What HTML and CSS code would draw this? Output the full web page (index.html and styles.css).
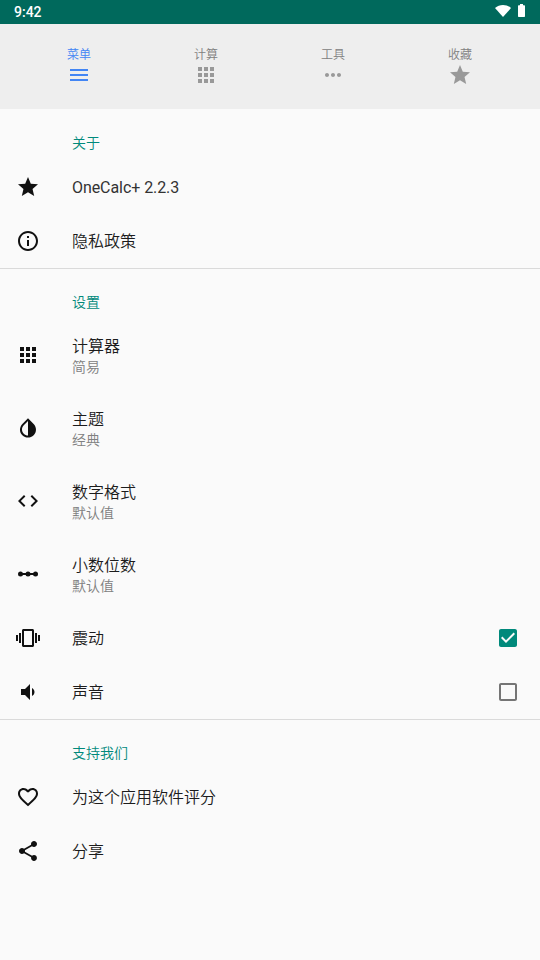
FILE: index.html
```html
<!DOCTYPE html>
<html lang="zh-CN">
  <head>
    <meta charset="UTF-8" />
    <meta name="viewport" content="width=device-width, initial-scale=1.0" />
    <title>OneCalc+</title>
    <link rel="stylesheet" href="styles.css">
  </head>
  <body>
    <header class="status-bar">
      <span class="clock">9:42</span>
      <div class="status-icons">
        <svg class="wifi" width="16" height="12" viewBox="0 0 16 12"><path d="M0 3C4.500-.9 11.500-.9 16 3L8 12z" /></svg>
        <svg class="battery" width="7" height="13" viewBox="0 0 7 13"><path d="M2 0h3v1.300h1.300q.7 0 .7.700V12.300q0 .7-.7.700H.7q-.7 0-.7-.7V2q0-.7.700-.7H2z" /></svg>
      </div>
    </header>

    <nav class="tabs">
      <a class="tab active" href="#">
        <span>菜单</span>
        <svg class="icon" viewBox="0 0 24 24"><path d="M3 18h18v-2H3v2zm0-5h18v-2H3v2zm0-7v2h18V6H3z" /></svg>
      </a>
      <a class="tab" href="#">
        <span>计算</span>
        <svg class="icon" viewBox="0 0 24 24"><path d="M4 8h4V4H4v4zm6 12h4v-4h-4v4zm-6 0h4v-4H4v4zm0-6h4v-4H4v4zm6 0h4v-4h-4v4zm6-10v4h4V4h-4zm-6 4h4V4h-4v4zm6 6h4v-4h-4v4zm0 6h4v-4h-4v4z" /></svg>
      </a>
      <a class="tab" href="#">
        <span>工具</span>
        <svg class="icon" viewBox="0 0 24 24"><path d="M6 10c-1.100 0-2 .9-2 2s.9 2 2 2 2-.9 2-2-.9-2-2-2zm12 0c-1.100 0-2 .9-2 2s.9 2 2 2 2-.9 2-2-.9-2-2-2zm-6 0c-1.100 0-2 .9-2 2s.9 2 2 2 2-.9 2-2-.9-2-2-2z" /></svg>
      </a>
      <a class="tab" href="#">
        <span>收藏</span>
        <svg class="icon" viewBox="0 0 24 24"><path d="M12 17.270L18.180 21l-1.640-7.030L22 9.240l-7.190-.61L12 2 9.190 8.630 2 9.240l5.460 4.730L5.820 21z" /></svg>
      </a>
    </nav>

    <main>
      <section class="group">
        <h2>关于</h2>
        <div class="row">
          <svg class="icon" viewBox="0 0 24 24"><path d="M12 17.270L18.180 21l-1.640-7.030L22 9.240l-7.190-.61L12 2 9.190 8.630 2 9.240l5.460 4.730L5.820 21z" /></svg>
          <div class="title latin">OneCalc+ 2.2.3</div>
        </div>
        <div class="row">
          <svg class="icon" viewBox="0 0 24 24"><path d="M11 7h2v2h-2zm0 4h2v6h-2zm1-9C6.480 2 2 6.480 2 12s4.480 10 10 10 10-4.480 10-10S17.520 2 12 2zm0 18c-4.410 0-8-3.590-8-8s3.590-8 8-8 8 3.590 8 8-3.590 8-8 8z" /></svg>
          <div class="title">隐私政策</div>
        </div>
      </section>

      <section class="group">
        <h2>设置</h2>
        <div class="row tall">
          <svg class="icon" viewBox="0 0 24 24"><path d="M4 8h4V4H4v4zm6 12h4v-4h-4v4zm-6 0h4v-4H4v4zm0-6h4v-4H4v4zm6 0h4v-4h-4v4zm6-10v4h4V4h-4zm-6 4h4V4h-4v4zm6 6h4v-4h-4v4zm0 6h4v-4h-4v4z" /></svg>
          <div>
            <div class="title">计算器</div>
            <div class="summary">简易</div>
          </div>
        </div>
        <div class="row tall">
          <svg class="icon" viewBox="0 0 24 24"><path d="M17.660 7.930L12 2.270 6.340 7.930c-3.120 3.120-3.120 8.190 0 11.310C7.900 20.800 9.950 21.580 12 21.580s4.100-.78 5.660-2.340c3.120-3.120 3.120-8.190 0-11.310zM12 19.590c-1.600 0-3.110-.62-4.240-1.760C6.620 16.690 6 15.190 6 13.590s.62-3.110 1.760-4.240L12 5.100v14.490z" /></svg>
          <div>
            <div class="title">主题</div>
            <div class="summary">经典</div>
          </div>
        </div>
        <div class="row tall">
          <svg class="icon" viewBox="0 0 24 24"><path d="M9.400 16.600L4.800 12l4.600-4.600L8 6l-6 6 6 6 1.400-1.400zm5.200 0l4.600-4.600-4.600-4.600L16 6l6 6-6 6-1.400-1.400z" /></svg>
          <div>
            <div class="title">数字格式</div>
            <div class="summary">默认值</div>
          </div>
        </div>
        <div class="row tall">
          <svg class="icon" viewBox="0 0 24 24"><path d="M4.500 11h15v2h-15z" /><circle cx="4.500" cy="12" r="2.500" /><circle cx="12" cy="12" r="2.500" /><circle cx="19.500" cy="12" r="2.500" /></svg>
          <div>
            <div class="title">小数位数</div>
            <div class="summary">默认值</div>
          </div>
        </div>
        <div class="row">
          <svg class="icon" viewBox="0 0 24 24"><path d="M0 15h2V9H0v6zm3 2h2V7H3v10zm19-8v6h2V9h-2zm-3 8h2V7h-2v10zM16.500 3h-9C6.670 3 6 3.670 6 4.500v15c0 .83.670 1.500 1.500 1.500h9c.83 0 1.500-.67 1.500-1.500v-15c0-.83-.67-1.500-1.500-1.500zM16 19H8V5h8v14z" /></svg>
          <div class="title">震动</div>
          <svg class="icon checkbox checked" viewBox="0 0 24 24"><path d="M19 3H5c-1.110 0-2 .9-2 2v14c0 1.100.890 2 2 2h14c1.110 0 2-.9 2-2V5c0-1.100-.89-2-2-2zm-9 14l-5-5 1.410-1.410L10 14.170l7.590-7.590L19 8l-9 9z" /></svg>
        </div>
        <div class="row">
          <svg class="icon" viewBox="0 0 24 24"><path d="M18.500 12c0-1.770-1.020-3.290-2.500-4.030v8.050c1.480-.73 2.500-2.250 2.500-4.020zM5 9v6h4l5 5V4L9 9H5z" /></svg>
          <div class="title">声音</div>
          <svg class="icon checkbox" viewBox="0 0 24 24"><path d="M19 5v14H5V5h14m0-2H5c-1.100 0-2 .9-2 2v14c0 1.100.900 2 2 2h14c1.100 0 2-.9 2-2V5c0-1.100-.9-2-2-2z" /></svg>
        </div>
      </section>

      <section class="group">
        <h2>支持我们</h2>
        <div class="row">
          <svg class="icon" viewBox="0 0 24 24"><path d="M16.500 3c-1.740 0-3.410.81-4.500 2.090C10.910 3.810 9.240 3 7.500 3 4.420 3 2 5.420 2 8.500c0 3.780 3.400 6.860 8.550 11.540L12 21.350l1.450-1.320C18.600 15.360 22 12.280 22 8.500 22 5.420 19.580 3 16.500 3zm-4.400 15.550l-.1.100-.1-.1C7.140 14.240 4 11.390 4 8.500 4 6.500 5.500 5 7.500 5c1.540 0 3.040.99 3.570 2.360h1.870C13.460 5.990 14.960 5 16.500 5c2 0 3.500 1.500 3.500 3.500 0 2.890-3.140 5.740-7.900 10.050z" /></svg>
          <div class="title">为这个应用软件评分</div>
        </div>
        <div class="row">
          <svg class="icon" viewBox="0 0 24 24"><path d="M18 16.080c-.76 0-1.440.3-1.960.77L8.910 12.700c.05-.23.090-.46.090-.7s-.04-.47-.09-.7l7.050-4.110c.54.500 1.250.810 2.040.810 1.660 0 3-1.340 3-3s-1.340-3-3-3-3 1.340-3 3c0 .24.040.470.090.700L8.040 9.810C7.500 9.310 6.790 9 6 9c-1.660 0-3 1.340-3 3s1.340 3 3 3c.79 0 1.500-.31 2.040-.81l7.120 4.160c-.05.21-.08.43-.08.650 0 1.610 1.310 2.920 2.920 2.920 1.610 0 2.920-1.310 2.920-2.920s-1.310-2.920-2.920-2.920z" /></svg>
          <div class="title">分享</div>
        </div>
      </section>
    </main>
  </body>
</html>
```
FILE: styles.css
```css
* {
  box-sizing: border-box;
}
body {
  font-family: Roboto, "Noto Sans CJK SC", sans-serif;
  font-weight: 350;
  background-color: #fafafa;
  color: #1c1c1c;
  margin: 0;
}
svg {
  display: block;
  fill: currentColor;
}
.icon {
  width: 24px;
  height: 24px;
  flex: none;
}
.status-bar {
  display: flex;
  justify-content: space-between;
  height: 24px;
  padding: 0 15px 0 14px;
  background-color: #00695c;
  color: white;
}
.clock {
  font-size: 14px;
  font-weight: 500;
  line-height: 25px;
}
.status-icons {
  display: flex;
  gap: 7px;
  padding-top: 4px;
}
.wifi {
  margin-top: 1px;
}
.tabs {
  display: flex;
  height: 85px;
  padding: 23px 17px 0 15px;
  background-color: #eeeeee;
}
.tab {
  flex: 1;
  display: flex;
  flex-direction: column;
  align-items: center;
  color: #999999;
  text-decoration: none;
  font-size: 12px;
  line-height: 16px;
}
.tab span {
  height: 16px;
  padding-left: 1px;
  line-height: 17px;
  color: #808080;
}
.tab.active,
.tab.active span {
  color: #4285f4;
}
.group + .group {
  border-top: 1px solid #dadada;
}
.group h2 {
  height: 51px;
  margin: 0;
  padding: 24px 0 0 72px;
  color: #00897b;
  font-size: 14px;
  font-weight: 350;
  line-height: 20px;
}
.group + .group h2 {
  height: 50px;
  padding-top: 23px;
}
.row {
  display: flex;
  align-items: center;
  gap: 32px;
  height: 54px;
  padding: 0 20px 0 16px;
}
.row .icon {
  color: #111111;
}
.row.tall {
  height: 73px;
  padding-bottom: 1px;
}
.title {
  padding-top: 2px;
  font-size: 16px;
  line-height: 22px;
}
.tall .title {
  padding-top: 3px;
  line-height: 21px;
}
.tall .summary {
  padding-top: 1px;
  line-height: 19px;
}
.title.latin {
  font-weight: 400;
  color: #333333;
  letter-spacing: -0.07px;
}
.summary {
  color: #808080;
  font-size: 14px;
}
.row .checkbox {
  margin-left: auto;
  color: #757575;
}
.row .checkbox.checked {
  color: #00897b;
}
```
